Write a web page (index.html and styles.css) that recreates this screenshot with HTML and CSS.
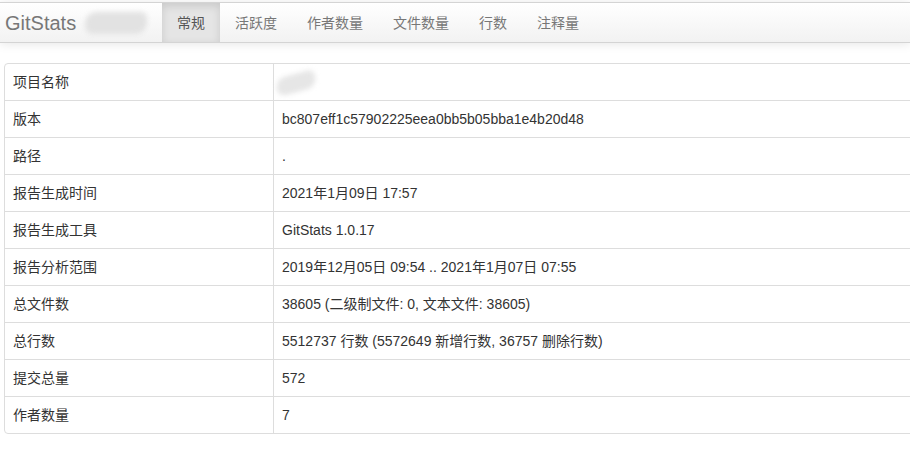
FILE: index.html
```html
<!DOCTYPE html>
<html lang="zh-CN">

<head>
    <meta charset="UTF-8">
    <title>GitStats</title>
    <link rel="stylesheet" href="styles.css">
</head>

<body>
    <div class="navbar">
        <div class="brand">GitStats <span class="smudge"></span></div>
        <ul class="nav">
            <li class="active"><a href="#">常规</a></li>
            <li><a href="#">活跃度</a></li>
            <li><a href="#">作者数量</a></li>
            <li><a href="#">文件数量</a></li>
            <li><a href="#">行数</a></li>
            <li><a href="#">注释量</a></li>
        </ul>
    </div>

    <div class="content">
        <table class="info">
            <tr><td>项目名称</td><td><span class="smudge small"></span></td></tr>
            <tr><td>版本</td><td>bc807eff1c57902225eea0bb5b05bba1e4b20d48</td></tr>
            <tr><td>路径</td><td>.</td></tr>
            <tr><td>报告生成时间</td><td>2021年1月09日 17:57</td></tr>
            <tr><td>报告生成工具</td><td>GitStats 1.0.17</td></tr>
            <tr><td>报告分析范围</td><td>2019年12月05日 09:54 .. 2021年1月07日 07:55</td></tr>
            <tr><td>总文件数</td><td>38605 (二级制文件: 0, 文本文件: 38605)</td></tr>
            <tr><td>总行数</td><td>5512737 行数 (5572649 新增行数, 36757 删除行数)</td></tr>
            <tr><td>提交总量</td><td>572</td></tr>
            <tr><td>作者数量</td><td>7</td></tr>
        </table>
    </div>
</body>

</html>
```

FILE: styles.css
```css
* {
    margin: 0;
    padding: 0;
    box-sizing: border-box;
}

html,
body {
    background: #fff;
    overflow: hidden;
}

body {
    padding-top: 2px;
    font-family: "Liberation Sans", "Noto Sans CJK SC", Arial, sans-serif;
    font-size: 14px;
    line-height: 20px;
    color: #333;
}

.navbar {
    display: flex;
    align-items: stretch;
    height: 41px;
    background: linear-gradient(#ffffff, #f2f2f2);
    border-top: 1px solid #d4d4d4;
    border-bottom: 1px solid #d4d4d4;
    box-shadow: 0 1px 10px rgba(0, 0, 0, 0.1);
}

.brand {
    display: flex;
    align-items: center;
    width: 162px;
    padding-left: 5px;
    font-size: 20px;
    color: #777;
}

.smudge {
    display: inline-block;
    width: 62px;
    height: 22px;
    margin-left: 9px;
    background: #e2e2e2;
    border-radius: 12px 6px 12px 8px;
    filter: blur(2.5px);
}

.smudge.small {
    width: 40px;
    height: 18px;
    margin: 2px 0 0 -6px;
    vertical-align: top;
    background: #e6e6e6;
    transform: rotate(-15deg);
}

.nav {
    display: flex;
    list-style: none;
}

.nav li a {
    display: block;
    height: 39px;
    padding: 10px 15px 9px;
    color: #777;
    text-decoration: none;
}

.nav li.active a {
    background: #e5e5e5;
    box-shadow: inset 0 3px 8px rgba(0, 0, 0, 0.125);
    color: #555;
}

.content {
    padding: 20px 0 0 4px;
}

.info {
    width: 920px;
    border: 1px solid #ddd;
    border-radius: 4px;
    border-collapse: separate;
    border-spacing: 0;
}

.info td {
    height: 37px;
    padding: 8px;
    vertical-align: top;
    border-top: 1px solid #ddd;
}

.info tr:first-child td {
    border-top: none;
    height: 36px;
}

.info td:first-child {
    width: 268px;
}

.info td + td {
    border-left: 1px solid #ddd;
}
```
